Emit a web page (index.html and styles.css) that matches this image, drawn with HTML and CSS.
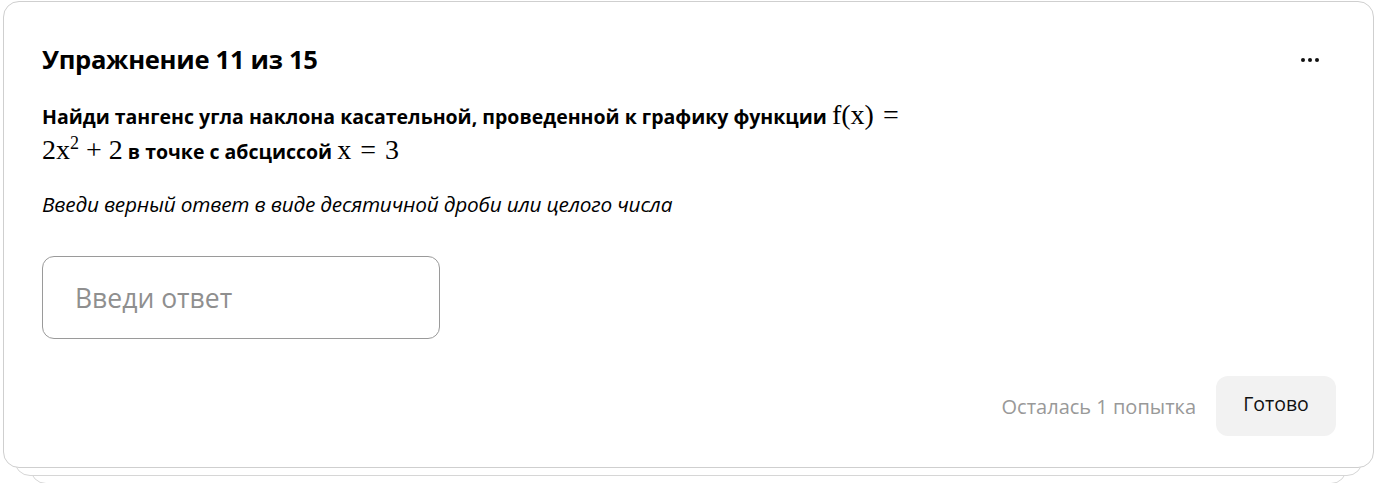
FILE: index.html
```html
<!DOCTYPE html>
<html lang="ru">
<head>
<meta charset="utf-8">
<link rel="stylesheet" href="styles.css">
</head>
<body>
<div class="stack">
  <div class="layer layer-3"></div>
  <div class="layer layer-2"></div>
  <div class="card">
    <div class="head">
      <h1 class="title">Упражнение 11 из 15</h1>
      <button class="more" aria-label="Ещё"><span></span><span></span><span></span></button>
    </div>
    <p class="question">Найди тангенс угла наклона касательной, проведенной к графику функции <span class="math">f(x)<span class="rel">=</span></span><br><span class="math">2x<sup>2</sup><span class="bin">+</span>2</span> в точке с абсциссой <span class="math">x<span class="rel">=</span>3</span></p>
    <p class="hint">Введи верный ответ в виде десятичной дроби или целого числа</p>
    <div class="answer"><span class="placeholder">Введи ответ</span></div>
    <div class="footer">
      <span class="tries">Осталась 1 попытка</span>
      <button class="done">Готово</button>
    </div>
  </div>
</div>
</body>
</html>
```

FILE: styles.css
```css
html, body {
  margin: 0;
  padding: 0;
  background: #ffffff;
}
body {
  font-family: "Open Sans", "Noto Sans", sans-serif;
  color: #000;
  width: 1391px;
  height: 483px;
  overflow: hidden;
}
.stack {
  position: relative;
  padding: 1px 17px 0 3px;
}
.layer {
  position: absolute;
  border: 1px solid #d6d6d6;
  border-radius: 16px;
  background: #fff;
}
.layer-2 {
  left: 14px;
  right: 28px;
  top: 10px;
  height: 464px;
}
.layer-3 {
  left: 30px;
  right: 44px;
  top: 20px;
  height: 462px;
}
.card {
  position: relative;
  box-sizing: border-box;
  height: 467px;
  border: 1px solid #cfcfcf;
  border-radius: 16px;
  background: #fff;
  padding: 38px 37px 0 38px;
}
.head {
  display: flex;
  justify-content: space-between;
  align-items: center;
}
.title {
  margin: 0;
  font-size: 25.6px;
  font-weight: 700;
  line-height: 40px;
  letter-spacing: -0.3px;
}
.more {
  border: 0;
  background: none;
  padding: 0;
  margin-right: 17px;
  display: flex;
  gap: 3px;
  cursor: pointer;
}
.more span {
  width: 4px;
  height: 4px;
  border-radius: 50%;
  background: #111;
}
.question {
  margin: 18px 0 0;
  font-size: 19.5px;
  font-weight: 700;
  line-height: 33px;
  width: 900px;
}
.math {
  font-family: "Liberation Serif", "DejaVu Serif", serif;
  font-weight: 400;
  font-size: 28px;
}
.math sup {
  font-size: 18px;
  line-height: 0;
}
.rel {
  margin: 0 9px;
}
.bin {
  margin: 0 7px;
}
.hint {
  margin: 22px 0 0;
  font-size: 20.8px;
  font-style: italic;
  line-height: 28px;
  letter-spacing: -0.2px;
}
.answer {
  margin-top: 38px;
  box-sizing: border-box;
  width: 398px;
  height: 83px;
  border: 1px solid #9a9a9a;
  border-radius: 12px;
  display: flex;
  align-items: center;
  padding-left: 32px;
}
.placeholder {
  font-size: 26.5px;
  color: #8f8f8f;
}
.footer {
  margin-top: 37px;
  display: flex;
  justify-content: flex-end;
  align-items: center;
  gap: 20px;
}
.tries {
  font-size: 20px;
  color: #999;
  padding-top: 0;
}
.done {
  border: 0;
  background: #f2f2f2;
  border-radius: 12px;
  width: 120px;
  height: 60px;
  font-family: "Open Sans", "Noto Sans", sans-serif;
  font-size: 19.5px;
  color: #111;
  cursor: pointer;
  padding: 0 0 5px;
}
```
